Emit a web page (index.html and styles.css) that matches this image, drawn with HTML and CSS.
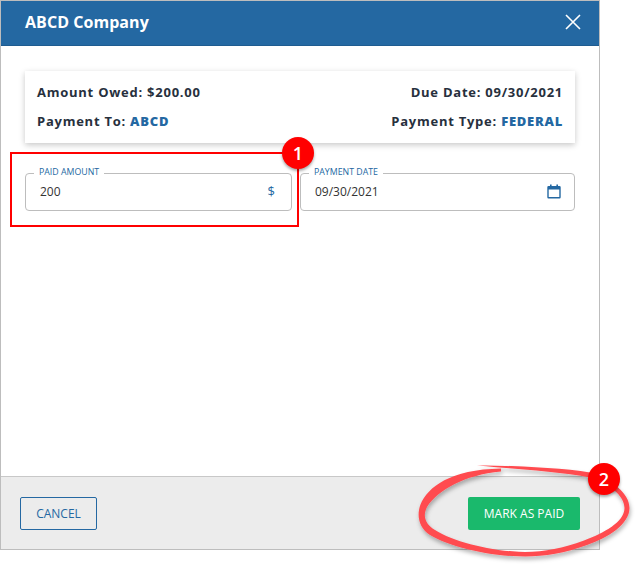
FILE: index.html
```html
<!DOCTYPE html>
<html lang="en">
<head>
<meta charset="utf-8">
<title>ABCD Company</title>
<link rel="stylesheet" href="styles.css">
</head>
<body>
<div class="dialog">
  <header class="head">
    <h1 class="title">ABCD Company</h1>
    <svg class="close" width="16" height="16" viewBox="0 0 16 16"><path d="M1 1L15 15M15 1L1 15" stroke="#fff" stroke-width="1.6" fill="none"/></svg>
  </header>
  <main class="body">
    <section class="card">
      <div class="row"><span>Amount Owed: $200.00</span><span>Due Date: 09/30/2021</span></div>
      <div class="row"><span>Payment To: <b class="accent">ABCD</b></span><span>Payment Type: <b class="accent">FEDERAL</b></span></div>
    </section>
    <section class="fields">
      <div class="field amount">
        <span class="legend">PAID AMOUNT</span>
        <span class="value">200</span>
        <span class="dollar">$</span>
      </div>
      <div class="field date">
        <span class="legend">PAYMENT DATE</span>
        <span class="value">09/30/2021</span>
        <svg class="cal" width="14" height="15" viewBox="0 0 14 15"><path d="M3 0.5h1.6V2h4.8V0.5H11V2h1.5A1.2 1.2 0 0 1 13.7 3.2v10.1a1.2 1.2 0 0 1-1.2 1.2h-11A1.2 1.2 0 0 1 .3 13.3V3.2A1.2 1.2 0 0 1 1.5 2H3zM1.7 5.6v7.5h10.6V5.6z" fill="#2468a2"/></svg>
      </div>
    </section>
  </main>
  <footer class="foot">
    <button class="btn cancel">CANCEL</button>
    <button class="btn paid">MARK AS PAID</button>
  </footer>
</div>
<div class="redbox"></div>
<svg class="scribble" width="635" height="566" viewBox="0 0 635 566">
  <defs><filter id="sh" x="-10%" y="-10%" width="120%" height="130%"><feDropShadow dx="1" dy="3" stdDeviation="2" flood-color="#000" flood-opacity="0.3"/></filter></defs>
  <path filter="url(#sh)" fill="#ff4b50" d="M477 465.500C510 465.500 560 467.500 590 472.500C612 480 629.500 493 629.500 508C629.500 524 608 538 587 545C565 553 545 556.500 525 556.500C490 556.500 450 547 430 535C418.500 528 416.500 515 420.500 504.500C428 487 450 469.500 501 468.500L501 471.500C464 475 438 490 427 507C422.500 516 425 524 435 530C454 542 492 551.500 525 552C545 552 563 548 584 540.500C604 533 624.500 522 624.500 508C624.500 496 610 484 590 477.500C560 471.500 515 469 477 465.500Z"/>
</svg>
<div class="badge one">1</div>
<div class="badge two">2</div>
</body>
</html>
```
FILE: styles.css
```css
* { box-sizing: border-box; }
html, body { margin: 0; padding: 0; background: #fff; }
body { width: 635px; height: 566px; position: relative; overflow: hidden; font-family: "Open Sans", "Noto Sans", sans-serif; }
.dialog { width: 600px; height: 550px; border: 1px solid #bdbdbd; display: flex; flex-direction: column; background: #fff; }
.head { height: 45px; flex: none; background: #2468a2; border-bottom: 1px solid #1f5c90; display: flex; align-items: center; justify-content: space-between; padding: 0 18px 2px 24px; }
.title { margin: 0; font-size: 16px; font-weight: 700; color: #fff; letter-spacing: 0.05px; }
.close { display: block; }
.body { flex: 1; padding: 25px 24px 0; }
.card { height: 72px; background: #fff; box-shadow: 0 2px 6px rgba(0,0,0,.22); padding: 10px 12px 0; display: flex; flex-direction: column; gap: 7px; }
.row { display: flex; justify-content: space-between; font-size: 13px; line-height: 22px; font-weight: 700; color: #27303d; letter-spacing: 0.75px; }
.accent { color: #2468a2; }
.fields { display: flex; gap: 8px; margin-top: 30px; }
.field { position: relative; height: 38px; border: 1px solid #bdbdbd; border-radius: 4px; display: flex; align-items: center; justify-content: space-between; font-size: 12px; color: #333; }
.amount { width: 267px; padding: 0 16px 2px 14px; }
.date { width: 275px; padding: 0 13px 2px 14px; }
.legend { position: absolute; left: 8px; top: -8px; padding: 0 5px; background: #fff; font-size: 8.8px; line-height: 12px; color: #2468a2; }
.dollar { color: #2468a2; font-size: 13px; }
.cal { display: block; margin-top: 1px; }
.foot { height: 73px; flex: none; background: #ececec; border-top: 1px solid #c8c8c8; display: flex; align-items: center; justify-content: space-between; padding: 0 19px; }
.btn { height: 33px; border-radius: 2px; font-family: inherit; font-size: 12px; padding: 0; }
.cancel { width: 77px; background: transparent; border: 1px solid #2468a2; color: #2468a2; }
.paid { width: 112px; background: #1ab96c; border: 0; color: #fff; }
.redbox { position: absolute; left: 10px; top: 152px; width: 289px; height: 75px; border: 2px solid #f00; }
.scribble { position: absolute; left: 0; top: 0; pointer-events: none; }
.badge { position: absolute; width: 32px; height: 32px; border-radius: 50%; background: #f00; color: #fff; font-size: 18px; font-weight: 600; display: flex; align-items: center; justify-content: center; box-shadow: 0 2px 3px rgba(0,0,0,.35); }
.one { left: 282px; top: 137px; }
.two { left: 588px; top: 463px; }
```
